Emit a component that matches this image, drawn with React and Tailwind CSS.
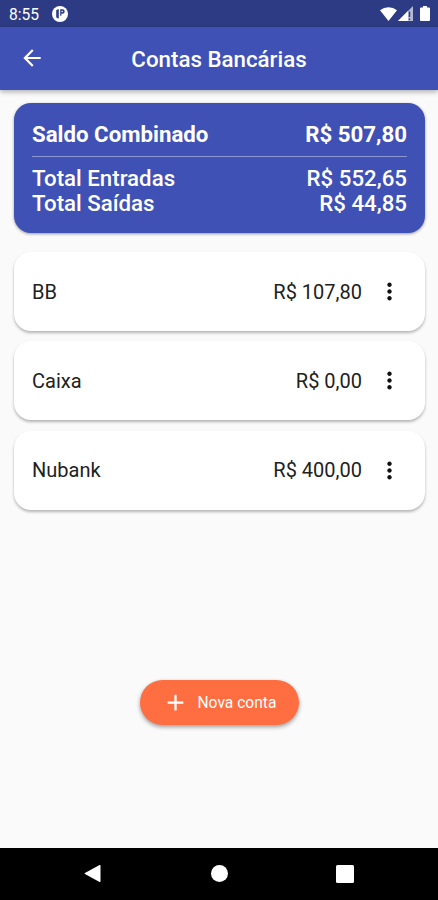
const ACCOUNTS = [
  { id: 'bb', name: 'BB', balance: 'R$ 107,80' },
  { id: 'caixa', name: 'Caixa', balance: 'R$ 0,00' },
  { id: 'nubank', name: 'Nubank', balance: 'R$ 400,00' }
];

export default function App() {
  return (
    <div className="w-full h-screen flex flex-col bg-[#fafafa] font-['Roboto',sans-serif] overflow-hidden">
      <StatusBar />
      <header className="relative z-10 h-[62.5px] flex-shrink-0 grid grid-cols-[64px_1fr_64px] items-center bg-[#3f51b5] text-white shadow-[0_2px_5px_rgba(0,0,0,0.3)]">
        <button className="pl-[19px]" aria-label="Voltar">
          <svg className="w-[26px] h-[26px]" viewBox="0 0 24 24" fill="currentColor">
            <path d="M20 11H7.83l5.59-5.59L12 4l-8 8 8 8 1.41-1.41L7.83 13H20v-2z" />
          </svg>
        </button>
        <h1 className="text-center text-[22.3px] leading-none font-medium whitespace-nowrap pt-0.5">Contas Bancárias</h1>
      </header>

      <main className="flex-1 flex flex-col px-3.5 pt-[13.5px]">
        <Summary />
        <ul className="mt-[19px] flex flex-col gap-[10.4px]">
          {ACCOUNTS.map((account) => (
            <AccountRow key={account.id} account={account} />
          ))}
        </ul>
        <button className="mt-auto mb-[123px] self-center w-[159px] h-[44.5px] pl-[22px] rounded-full flex items-center bg-[#ff6e40] text-white shadow-[0_2px_4px_rgba(0,0,0,0.38)]">
          <svg className="w-[27px] h-[27px]" viewBox="0 0 24 24" fill="currentColor">
            <path d="M19 13h-6v6h-2v-6H5v-2h6V5h2v6h6v2z" />
          </svg>
          <span className="ml-[9px] pt-[3px] text-[15.6px] leading-none whitespace-nowrap">Nova conta</span>
        </button>
      </main>

      <NavigationBar />
    </div>
  );
}

function StatusBar() {
  return (
    <div className="h-[27px] flex-shrink-0 flex items-center justify-between pl-[9px] pr-[8px] pt-0.5 bg-[#2c3b83] text-white">
      <div className="flex items-center gap-[13px]">
        <span className="pt-0.5 text-[15.6px] leading-none">8:55</span>
        <svg className="w-4 h-4 mb-0.5" viewBox="0 0 16 16">
          <circle cx="8" cy="8" r="8" fill="#fff" />
          <path d="M4.2 4.2Q5 3.3 6.8 3.3V12.5Q5.5 12.5 4.2 11.3z" fill="#2c3b83" />
          <path d="M8.2 3.3h2.3a2.2 2.2 0 0 1 0 4.400H9.400v2H8.200z" fill="#2c3b83" />
          <circle cx="10.2" cy="5.5" r="0.8" fill="#fff" />
        </svg>
      </div>
      <div className="flex items-center mb-0.5">
        <svg className="w-[17px] h-[14px]" viewBox="0 0 17 14" fill="#fff">
          <path d="M8.5 14 0 3.2a13.500 13.500 0 0 1 17 0z" />
        </svg>
        <svg className="ml-[1px] w-[15px] h-[15px]" viewBox="0 0 15 15">
          <path d="M15 0v15H0z" fill="#fff" fillOpacity="0.65" />
          <path d="M10 5v10H0z" fill="#fff" />
          <path d="M11.5 5.5v5.5M11.5 12.5v1.5" stroke="#2c3b83" strokeWidth="1.4" />
        </svg>
        <svg className="ml-[7px] w-[10px] h-[15px]" viewBox="0 0 10 15" fill="#fff">
          <path d="M3 0h4v1.5h2a1 1 0 0 1 1 1V14a1 1 0 0 1-1 1H1a1 1 0 0 1-1-1V2.5a1 1 0 0 1 1-1h2z" />
        </svg>
      </div>
    </div>
  );
}

function Summary() {
  return (
    <section className="h-[130px] flex-shrink-0 px-[18px] pt-[19px] rounded-[17px] bg-[#3f51b5] text-white text-[22.25px] leading-[25.5px] shadow-[0_1px_3px_rgba(0,0,0,0.4)] mr-[-1px]">
      <div className="flex justify-between font-bold">
        <span>Saldo Combinado</span>
        <span>R$ 507,80</span>
      </div>
      <hr className="mt-2 mb-[9px] border-t border-white/40" />
      <div className="flex justify-between font-medium">
        <span>Total Entradas</span>
        <span>R$ 552,65</span>
      </div>
      <div className="flex justify-between font-medium">
        <span>Total Saídas</span>
        <span>R$ 44,85</span>
      </div>
    </section>
  );
}

function AccountRow({ account }) {
  return (
    <li className="h-[79px] mr-[-1px] pl-[18px] pr-[22px] flex items-center rounded-[17px] bg-white text-[#212121] text-[20px] leading-none shadow-[0_2px_3px_rgba(0,0,0,0.28)]">
      <span className="flex-1">{account.name}</span>
      <span>{account.balance}</span>
      <button className="ml-[13.5px] mr-[0.5px]" aria-label="Opções">
        <svg className="w-[27px] h-[27px]" viewBox="0 0 24 24" fill="#111">
          <path d="M12 8c1.1 0 2-.9 2-2s-.9-2-2-2-2 .9-2 2 .9 2 2 2zm0 2c-1.1 0-2 .9-2 2s.9 2 2 2 2-.9 2-2-.9-2-2-2zm0 6c-1.1 0-2 .9-2 2s.9 2 2 2 2-.9 2-2-.9-2-2-2z" />
        </svg>
      </button>
    </li>
  );
}

function NavigationBar() {
  return (
    <nav className="h-[52.5px] flex-shrink-0 flex items-center justify-between pl-[84px] pr-[84px] bg-black">
      <svg className="w-[17px] h-[19px]" viewBox="0 0 18 19" fill="#fff">
        <path d="M17.5 1.2v16.6a.7.7 0 0 1-1 .6L1 10.1a.7.7 0 0 1 0-1.2L16.5.6a.7.7 0 0 1 1 .6z" />
      </svg>
      <span className="ml-[1.5px] w-[17px] h-[17px] rounded-full bg-white" />
      <span className="w-[18px] h-[18px] rounded-[1.5px] bg-white" />
    </nav>
  );
}
